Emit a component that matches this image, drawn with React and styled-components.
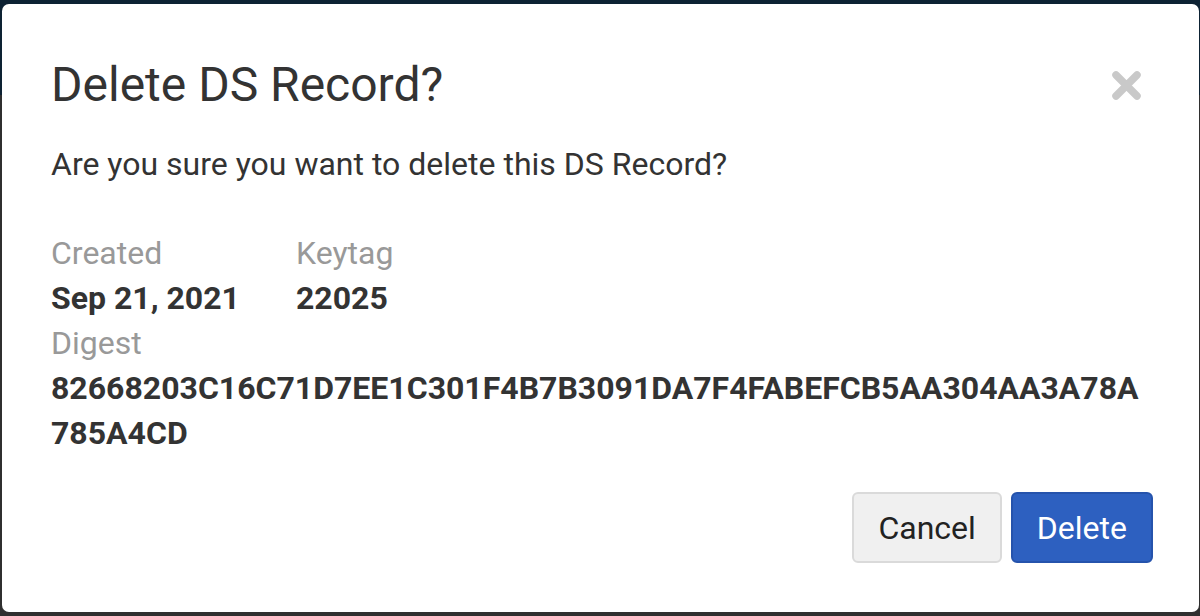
import React from 'react';
import styled, {createGlobalStyle} from 'styled-components';

const GlobalStyle = createGlobalStyle`
  html, body {
    margin: 0;
    padding: 0;
  }

  body {
    font-family: Roboto, "Liberation Sans", sans-serif;
    color: #333;
  }
`;

const App = () => {
    return (
        <Backdrop>
            <GlobalStyle/>
            <Modal role="dialog">
                <Header>
                    <Title>Delete DS Record?</Title>
                    <Close aria-label="Close">
                        <svg width="31" height="31" viewBox="0 0 31 31">
                            <path d="M5 5 L26 26 M26 5 L5 26" stroke="#c9c9c9" strokeWidth="7.5"
                                  strokeLinecap="round" fill="none"/>
                        </svg>
                    </Close>
                </Header>
                <Question>Are you sure you want to delete this DS Record?</Question>
                <Details>
                    <Field>
                        <Label>Created</Label>
                        <Value>Sep 21, 2021</Value>
                    </Field>
                    <Field>
                        <Label>Keytag</Label>
                        <Value>22025</Value>
                    </Field>
                    <Field wide>
                        <Label>Digest</Label>
                        <Value>82668203C16C71D7EE1C301F4B7B3091DA7F4FABEFCB5AA304AA3A78A785A4CD</Value>
                    </Field>
                </Details>
                <Footer>
                    <Button>Cancel</Button>
                    <Button primary>Delete</Button>
                </Footer>
            </Modal>
        </Backdrop>
    )
}

const Backdrop = styled.div`
  width: 1200px;
  height: 616px;
  padding: 4px 1px 4px 2px;
  box-sizing: border-box;
  background: linear-gradient(to bottom, #0d2233 0, #0d2233 95px, #2f2f2f 95px);
  display: flex;
`;

const Modal = styled.div`
  flex: 1;
  background: #fff;
  border-radius: 7px;
  padding: 55px 46px 49px 49px;
  display: flex;
  flex-direction: column;
`;

const Header = styled.header`
  display: flex;
  justify-content: space-between;
  align-items: center;
`;

const Title = styled.h1`
  margin: 0;
  font-size: 48px;
  font-weight: 400;
  line-height: 1.1;
  color: #333;
`;

const Close = styled.button`
  border: 0;
  background: none;
  padding: 0;
  margin-right: 11px;
  width: 31px;
  height: 31px;
  display: flex;
  cursor: pointer;
`;

const Question = styled.p`
  margin: 30px 0 0;
  font-size: 32px;
  line-height: 45px;
  color: #333;
`;

const Details = styled.div`
  margin-top: 44px;
  display: grid;
  grid-template-columns: 245px 1fr;
`;

const Field = styled.div`
  grid-column: ${props => props.wide ? '1 / -1' : 'auto'};
  font-size: 32px;
  line-height: 45px;
`;

const Label = styled.div`
  color: #999;
`;

const Value = styled.div`
  font-weight: 700;
  color: #333;
  word-break: break-all;
`;

const Footer = styled.footer`
  margin-top: auto;
  display: flex;
  justify-content: flex-end;
  gap: 9px;
`;

const Button = styled.button`
  height: 71px;
  padding: 0 24px;
  font-family: Roboto, "Liberation Sans", sans-serif;
  font-size: 32px;
  border-radius: 6px;
  cursor: pointer;
  border: 2px solid ${props => props.primary ? '#2553ac' : '#dadada'};
  background: ${props => props.primary ? '#2d60c0' : '#f0f0f0'};
  color: ${props => props.primary ? '#fff' : '#222'};
`;

export default App;
